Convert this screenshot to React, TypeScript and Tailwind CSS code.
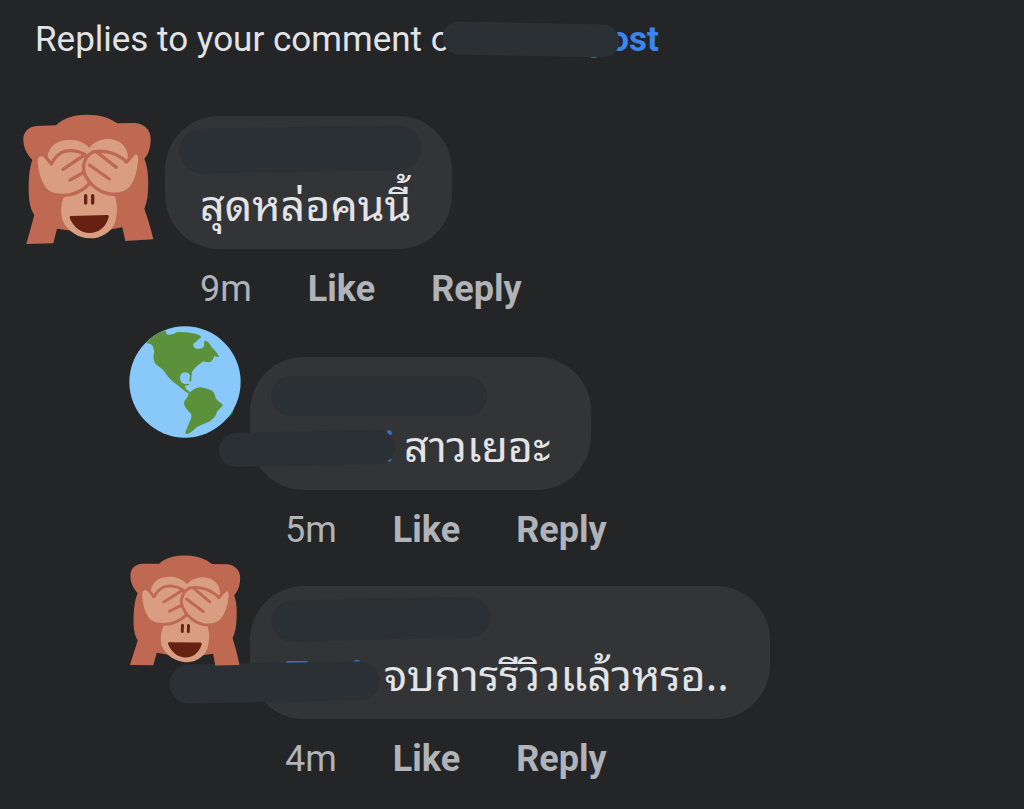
interface Stroke {
  from: [number, number];
  to: [number, number];
  width: number;
  color?: string;
}

interface CommentData {
  id: string;
  text: string;
  time: string;
  avatar: "monkey" | "globe";
  strokes: Stroke[];
  mentionClass?: string;
}

const LINK_BLUE = "#3470bd";

const comment: CommentData = {
  id: "c1",
  text: "สุดหล่อคนนี้",
  time: "9m",
  avatar: "monkey",
  strokes: [{ from: [37, 35], to: [234, 32], width: 45 }],
};

const replies: CommentData[] = [
  {
    id: "r1",
    text: "สาวเยอะ",
    time: "5m",
    avatar: "globe",
    strokes: [
      { from: [139, 75], to: [140, 76], width: 4, color: LINK_BLUE },
      { from: [139, 103], to: [140, 103], width: 3, color: LINK_BLUE },
      { from: [41, 39], to: [217, 39], width: 40 },
      { from: [-14, 93], to: [128, 90], width: 34 },
    ],
    mentionClass: "w-[119px]",
  },
  {
    id: "r2",
    text: "จบการรีวิวแล้วหรอ..",
    time: "4m",
    avatar: "monkey",
    strokes: [
      { from: [38, 77], to: [56, 77], width: 4, color: LINK_BLUE },
      { from: [106, 76], to: [108, 76], width: 4, color: LINK_BLUE },
      { from: [42, 35], to: [220, 31], width: 41 },
      { from: [-61, 98], to: [110, 95], width: 39 },
    ],
    mentionClass: "w-[99px]",
  },
];

export default function App() {
  return (
    <main className="min-h-screen bg-[#242527] pb-7 font-['Roboto','Noto_Sans',sans-serif] text-[#e2e3e6]">
      <h1 className="relative flex pt-[19px] pl-[35px] text-[35px] leading-[42px] font-normal whitespace-nowrap">
        <span>Replies to your comment o</span>
        <a href="#post" className="ml-[139px] font-bold text-[#3b86ee]">
          post
        </a>
        <Scribble strokes={[{ from: [459, 38], to: [603, 41], width: 33 }]} />
      </h1>

      <section className="pt-[53px] pl-[23px]">
        <Comment data={comment} />
        <div className="mt-[17px] ml-[106px] flex flex-col gap-[5px]">
          {replies.map((r) => (
            <Comment key={r.id} data={r} nested />
          ))}
        </div>
      </section>
    </main>
  );
}

function Comment({ data, nested }: { data: CommentData; nested?: boolean }) {
  return (
    <article className={`flex items-start ${nested ? "gap-[9px]" : "gap-3"}`}>
      <div className={`relative z-10 shrink-0 ${nested ? "size-28" : "size-[130px]"}`}>
        {data.avatar === "monkey" ? <Monkey upright={nested} /> : <Globe />}
      </div>
      <div className={nested ? "pt-[31px]" : "pt-[2px]"}>
        <div className="relative w-fit rounded-[54px] bg-[#333436] pt-3 pr-[41px] pb-[21px] pl-[35px]">
          {/* name row, painted over */}
          <div className="h-12" />
          <Scribble strokes={data.strokes} />
          <p
            lang="th"
            className="flex font-['Noto_Sans_Thai_Looped','Noto_Sans_Thai','Loma','Garuda','Waree',sans-serif] text-[43px] leading-[52px] whitespace-nowrap"
          >
            {data.mentionClass && <span className={data.mentionClass} />}
            {data.text}
          </p>
        </div>
        <div className="flex gap-14 pt-5 pl-[35px] text-[36px] leading-10 text-[#b0b3b8]">
          <span>{data.time}</span>
          <button type="button" className="font-bold">Like</button>
          <button type="button" className="font-bold">Reply</button>
        </div>
      </div>
    </article>
  );
}

function Scribble({ strokes }: { strokes: Stroke[] }) {
  return (
    <svg className="pointer-events-none absolute inset-0 size-full overflow-visible" aria-hidden="true">
      {strokes.map((s, i) => (
        <line
          key={i}
          x1={s.from[0]}
          y1={s.from[1]}
          x2={s.to[0]}
          y2={s.to[1]}
          stroke={s.color ?? "#2b3034"}
          strokeWidth={s.width}
          strokeLinecap="round"
        />
      ))}
    </svg>
  );
}

function Monkey({ upright }: { upright?: boolean }) {
  return (
    <svg
      viewBox="39 42 390 390"
      className="size-full overflow-visible"
      role="img"
      aria-label="Monkey covering its eyes"
    >
      <g transform={upright ? "rotate(2 234 237)" : undefined}>
        <path
          fill="#bf6952"
          d="M138 76C160 53 195 44 232 44C270 44 300 54 322 70L376 69C404 72 422 90 422 116C422 142 416 162 403 176C413 200 416 230 414 270C413 300 408 312 403 326C414 358 424 390 430 418L346 423L337 382L240 400L141 386L130 430L49 432L73 345C60 326 56 300 56 268C56 232 58 205 67 180C50 163 40 143 40 118C40 95 56 80 80 78Z"
        />
        <path
          fill="#d99e82"
          d="M238 144C258 118 292 111 322 123C347 134 358 160 352 186L315 290C324 315 322 345 315 368C303 398 273 415 240 415C205 414 172 393 158 362C150 338 153 312 163 286L113 190C108 162 120 138 145 126C180 113 215 120 238 144Z"
        />
        <path
          fill="#d99e82"
          stroke="#bf6952"
          strokeWidth="10"
          strokeLinejoin="round"
          d="M124 192L108 172C96 158 78 163 78 182C79 206 86 240 102 264C116 284 140 288 164 286C196 284 220 270 238 252L236 184L224 163C200 150 172 148 154 158C142 165 132 176 124 192Z"
        />
        <path
          fill="#d99e82"
          stroke="#bf6952"
          strokeWidth="10"
          strokeLinejoin="round"
          d="M350 186L369 163C381 152 391 162 389 182C387 212 378 244 364 262C349 280 326 285 300 282C268 276 240 254 225 224C214 198 224 168 249 156C286 148 326 162 350 186Z"
        />
        <g fill="none" stroke="#bf6952" strokeWidth="10" strokeLinecap="round">
          <path d="M159 208L223 165M180 240L222 217M262 157L319 202M238 195L298 237" />
        </g>
        <g stroke="#662113" strokeWidth="10" strokeLinecap="round">
          <path d="M227 287V309M248 287V309" />
        </g>
        <path
          fill="#662113"
          d="M182 348L292 345C298 346 297 352 294 358C284 385 264 399 239 399C213 399 191 381 180 356C178 351 179 348 182 348Z"
        />
      </g>
    </svg>
  );
}

function Globe() {
  return (
    <svg viewBox="27 33 336 336" className="size-full overflow-visible" role="img" aria-label="Globe showing the Americas">
      <path fill="#238a3c" d="M342 275C344 288 334 304 316 312L318 290Z" />
      <circle cx="195" cy="201" r="167" fill="#88c9f9" />
      <path
        fill="#5c913b"
        d="M78 84C95 66 114 53 136 46L140 58C150 62 161 57 170 52C190 50 210 53 229 57C237 59 244 63 243 68C234 73 229 80 220 86C218 95 225 102 238 101C250 101 254 94 252 84L255 76C264 80 270 88 275 97C284 106 293 114 297 127L282 124C280 133 277 140 269 141C261 143 255 139 248 140C235 148 224 158 216 170L213 201L208 197L210 180C205 172 195 170 187 174C178 180 178 193 184 201C190 209 198 207 206 206L207 210L194 212L198 222L210 232L206 236C190 227 177 212 164 204C153 194 144 186 138 176C132 166 121 158 111 151C101 141 98 128 103 110C101 98 98 87 88 86Z"
      />
      <path
        fill="#5c913b"
        d="M204 239C213 227 225 219 239 217C254 218 265 223 276 227C285 233 285 244 288 252C296 260 303 264 309 270C303 281 291 284 289 296C285 310 272 316 264 322C253 326 243 330 233 335C222 341 216 351 203 357C196 358 194 352 199 345L207 324C216 308 216 300 211 294C201 284 192 274 192 263C194 253 204 249 204 239Z"
      />
    </svg>
  );
}
